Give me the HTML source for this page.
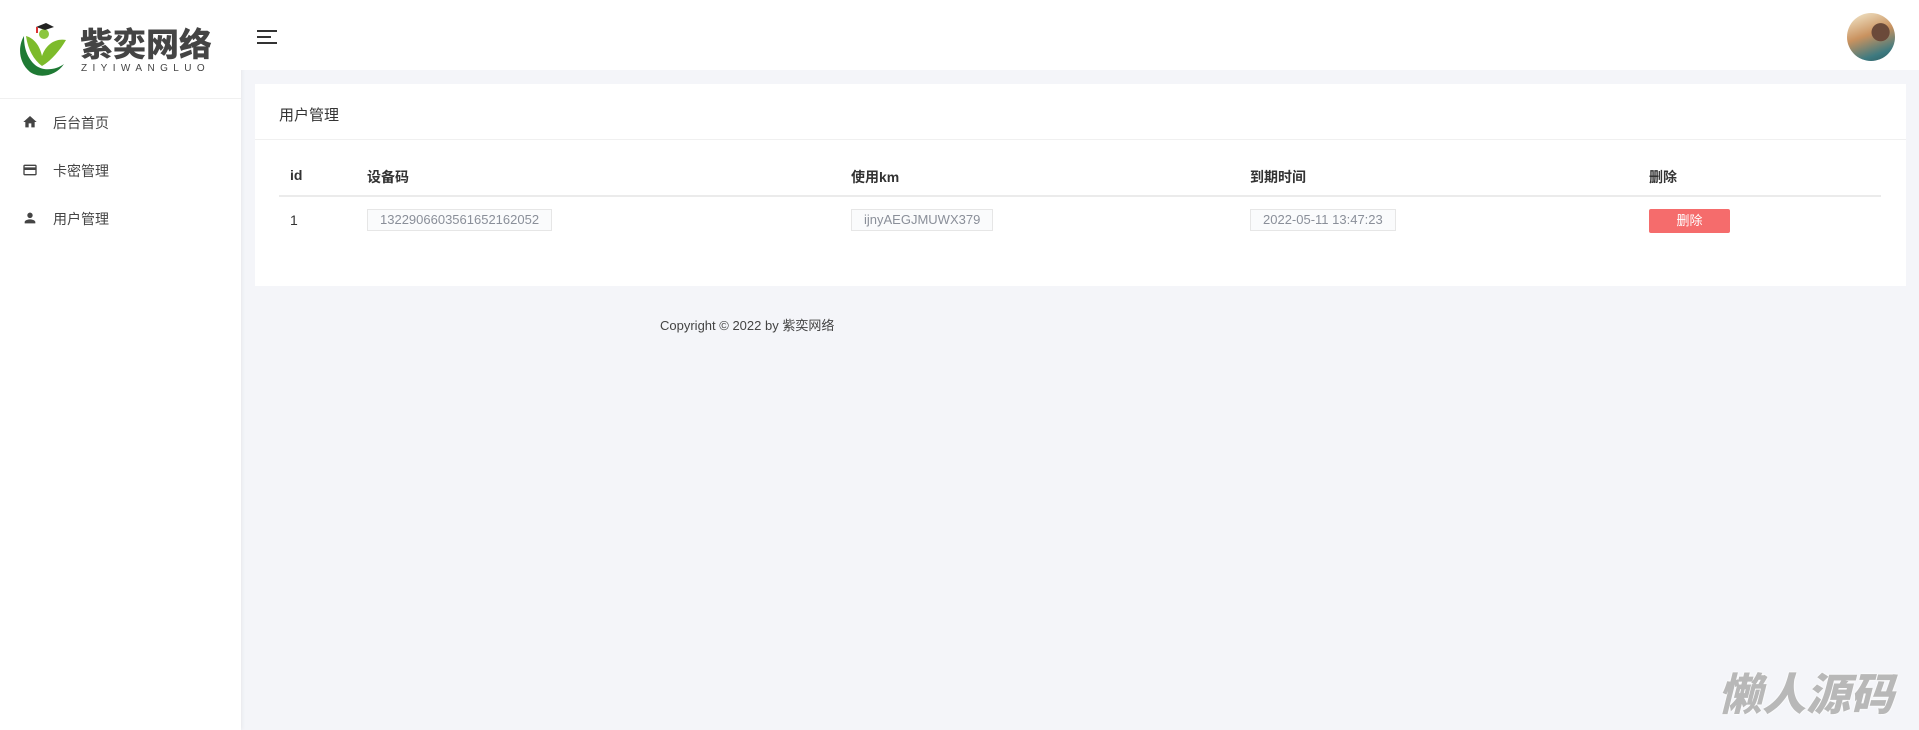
<!DOCTYPE html>
<html><head><meta charset="utf-8"><style>
*{margin:0;padding:0;box-sizing:border-box}
body{width:1919px;height:730px;background:#f4f5f9;font-family:"Liberation Sans","Noto Sans CJK SC",sans-serif;color:#333;position:relative;overflow:hidden;font-size:14px}
.side{position:absolute;left:0;top:0;width:241px;height:730px;background:#fff;box-shadow:1px 0 4px rgba(0,0,0,.06)}
.logo{height:99px;border-bottom:1px solid #f0f0f0;position:relative}
.menu div{position:absolute;left:0;font-size:14px;color:#444}
.menu svg{position:absolute;left:22px;top:0}
.menu span{position:absolute;left:53px;top:-1px;white-space:nowrap}
.top{position:absolute;left:241px;top:0;right:0;height:70px;background:#fff}
.card{position:absolute;left:255px;top:84px;width:1651px;height:202px;background:#fff}
.abs{position:absolute;white-space:nowrap}
.inp{position:absolute;height:22px;border:1px solid #e6e6e6;background:#fafbfc;color:#8a8f99;font-size:13px;line-height:20px;padding:0 12px;font-family:"Liberation Sans Narrow","Liberation Sans",sans-serif}
</style></head><body>
<div class="side">
 <div class="logo">
  <svg class="abs" style="left:16px;top:22px" width="52" height="56" viewBox="0 0 52 56">
   <path d="M8 14 C2 24 2 40 14 50 C24 57 40 54 48 42 C40 48 26 50 18 42 C10 34 8 24 8 14Z" fill="#1f7a34"/>
   <path d="M10 14 C18 16 24 24 26 34 C30 22 40 16 50 18 C44 28 36 38 26 44 C18 38 12 28 10 14Z" fill="#7dbb2b"/>
   <circle cx="28" cy="12" r="5" fill="#8cc63f"/>
   <path d="M20 5 L30 1 L38 5 L29 8Z" fill="#222"/>
   <rect x="20" y="5" width="2" height="6" fill="#d33"/>
  </svg>
  <div class="abs" style="left:80px;top:22px;font-size:33px;font-weight:900;color:#444;font-family:'Noto Sans CJK SC',sans-serif;letter-spacing:0px;line-height:40px">紫奕网络</div>
  <div class="abs" style="left:81px;top:63px;font-size:10px;color:#444;letter-spacing:5.4px">ZIYIWANGLUO</div>
 </div>
 <div class="menu">
  <div style="top:114px"><svg width="16" height="16" viewBox="0 0 24 24"><path d="M10 20v-6h4v6h5v-8h3L12 3 2 12h3v8z" fill="#444"/></svg><span>后台首页</span></div>
  <div style="top:162px"><svg width="16" height="16" viewBox="0 0 24 24"><path d="M20 4H4c-1.1 0-2 .9-2 2v12c0 1.1.9 2 2 2h16c1.1 0 2-.9 2-2V6c0-1.1-.9-2-2-2zm0 14H4v-6h16v6zm0-10H4V6h16v2z" fill="#444"/></svg><span>卡密管理</span></div>
  <div style="top:210px"><svg width="16" height="16" viewBox="0 0 24 24"><path d="M12 12c2.2 0 4-1.8 4-4s-1.8-4-4-4-4 1.8-4 4 1.8 4 4 4zm0 2c-2.7 0-8 1.3-8 4v2h16v-2c0-2.7-5.3-4-8-4z" fill="#444"/></svg><span>用户管理</span></div>
 </div>
</div>
<div class="top">
 <svg class="abs" style="left:16px;top:30px" width="21" height="15"><rect y="0" width="20" height="2" fill="#333"/><rect y="6" width="14" height="2" fill="#333"/><rect y="12" width="20" height="2" fill="#333"/></svg>
 <div class="abs" style="left:1606px;top:13px;width:48px;height:48px;border-radius:50%;background:radial-gradient(circle at 70% 40%,#6b4a3a 0 20%,transparent 21%),linear-gradient(160deg,#f5ecd0 0%,#c9925f 45%,#3e7a80 80%,#2c5b60 100%)"></div>
</div>
<div class="card">
 <div class="abs" style="left:24px;top:20px;font-size:15px;color:#333">用户管理</div>
 <div class="abs" style="left:0;right:0;top:55px;height:1px;background:#f0f0f0"></div>
 <div class="abs" style="left:35px;top:83px;font-weight:bold;font-size:14px;color:#333">id</div>
 <div class="abs" style="left:112px;top:83px;font-weight:bold;font-size:14px;color:#333">设备码</div>
 <div class="abs" style="left:596px;top:83px;font-weight:bold;font-size:14px;color:#333">使用km</div>
 <div class="abs" style="left:995px;top:83px;font-weight:bold;font-size:14px;color:#333">到期时间</div>
 <div class="abs" style="left:1394px;top:83px;font-weight:bold;font-size:14px;color:#333">删除</div>
 <div class="abs" style="left:24px;top:111px;width:1602px;height:2px;background:#ebebeb"></div>
 <div class="abs" style="left:35px;top:128px;font-size:14px">1</div>
 <div class="inp" style="left:112px;top:125px">1322906603561652162052</div>
 <div class="inp" style="left:596px;top:125px">ijnyAEGJMUWX379</div>
 <div class="inp" style="left:995px;top:125px">2022-05-11 13:47:23</div>
 <div class="abs" style="left:1394px;top:125px;width:81px;height:24px;background:#f56c6c;border-radius:2px;color:#fff;font-size:13px;text-align:center;line-height:24px">删除</div>
</div>
<div class="abs" style="left:660px;top:315px;font-size:13px;color:#444">Copyright © 2022 by 紫奕网络</div>
<div class="abs" style="left:1718px;top:666px;font-size:44px;font-weight:900;font-style:italic;color:#b8b8b8;font-family:'Noto Sans CJK SC',sans-serif;line-height:50px;text-shadow:0 0 2px #fff,0 0 2px #fff">懒人源码</div>
</body></html>
